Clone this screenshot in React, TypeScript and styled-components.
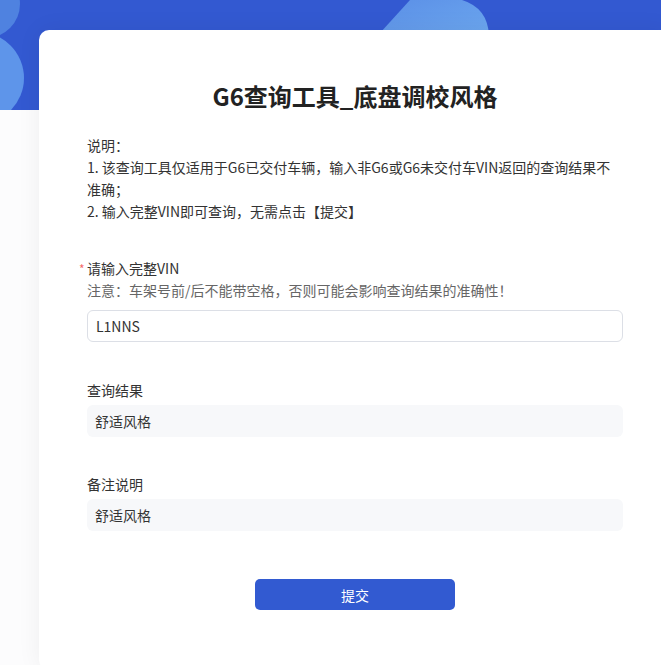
import React from "react";
import styled, { createGlobalStyle } from "styled-components";

const Global = createGlobalStyle`
  html, body { margin: 0; padding: 0; background: #fcfcfd; overflow: hidden; }
  body { font-family: "Noto Sans CJK SC", "Noto Sans", sans-serif; color: #333; }
  * { box-sizing: border-box; }
`;

const Page = styled.div`
  width: 661px;
  min-height: 665px;
  overflow: hidden;
`;

const Header = styled.div`
  position: relative;
  height: 110px;
  background: #3359d1;
  overflow: hidden;
`;

const Deco = styled.svg`
  position: absolute;
  left: 0;
  top: 0;
`;

const Card = styled.main`
  position: relative;
  margin: -80px 0 0 39px;
  width: 632px;
  min-height: 640px;
  background: #fff;
  border-radius: 10px;
  box-shadow: 0 0 24px rgba(0, 0, 0, 0.06);
  padding: 50px 48px 40px;
  display: flex;
  flex-direction: column;
`;

const Title = styled.h1`
  margin: 0;
  font-size: 24px;
  line-height: 32px;
  font-weight: 700;
  text-align: center;
  color: #222;
`;

const Notes = styled.div`
  margin-top: 22px;
  font-size: 14px;
  line-height: 22px;
  color: #333;
`;

const Field = styled.section<{ $gap: number }>`
  margin-top: ${(p) => p.$gap}px;
  display: flex;
  flex-direction: column;
`;

const Label = styled.label<{ $required?: boolean }>`
  position: relative;
  font-size: 14px;
  line-height: 22px;
  color: #333;
  &::before {
    content: ${(p) => (p.$required ? '"*"' : "none")};
    position: absolute;
    left: -8px;
    top: 1px;
    color: #f56c6c;
    font-size: 12px;
  }
`;

const Hint = styled.div`
  font-size: 14px;
  line-height: 22px;
  color: #666;
`;

const Input = styled.input`
  margin-top: 9px;
  height: 32px;
  width: 100%;
  border: 1px solid #dcdfe6;
  border-radius: 6px;
  padding: 0 8px;
  font-family: "Noto Sans CJK SC", "Noto Sans", sans-serif;
  font-size: 14px;
  color: #333;
  outline: none;
`;

const ReadBox = styled.div`
  margin-top: 4px;
  height: 32px;
  border-radius: 6px;
  background: #f7f8fa;
  padding: 0 8px;
  display: flex;
  align-items: center;
  font-size: 14px;
  color: #333;
`;

const Submit = styled.button`
  align-self: center;
  margin-top: 48px;
  width: 200px;
  height: 31px;
  border: none;
  border-radius: 5px;
  background: #325ad1;
  color: #fff;
  font-family: "Noto Sans CJK SC", "Noto Sans", sans-serif;
  font-size: 14px;
  cursor: pointer;
`;

export default function App() {
  return (
    <Page>
      <Global />
      <Header>
        <Deco width="661" height="110" viewBox="0 0 661 110">
          <defs>
            <linearGradient id="g1" x1="0" y1="0" x2="1" y2="1">
              <stop offset="0" stopColor="#5a8ee6" />
              <stop offset="1" stopColor="#6eaaf0" />
            </linearGradient>
          </defs>
          <circle cx="-14" cy="4" r="34" fill="#4f82e0" />
          <circle cx="-22" cy="78" r="46" fill="#5e95ea" />
          <path d="M370 44 L410 0 L462 0 Q488 8 489 36 L489 44 Z" fill="url(#g1)" />
        </Deco>
      </Header>
      <Card>
        <Title>G6查询工具_底盘调校风格</Title>
        <Notes>
          <div>说明：</div>
          <div>1. 该查询工具仅适用于G6已交付车辆，输入非G6或G6未交付车VIN返回的查询结果不准确；</div>
          <div>2. 输入完整VIN即可查询，无需点击【提交】</div>
        </Notes>
        <Field $gap={35}>
          <Label $required>请输入完整VIN</Label>
          <Hint>注意：车架号前/后不能带空格，否则可能会影响查询结果的准确性！</Hint>
          <Input defaultValue="L1NNS" />
        </Field>
        <Field $gap={37}>
          <Label>查询结果</Label>
          <ReadBox>舒适风格</ReadBox>
        </Field>
        <Field $gap={36}>
          <Label>备注说明</Label>
          <ReadBox>舒适风格</ReadBox>
        </Field>
        <Submit type="button">提交</Submit>
      </Card>
    </Page>
  );
}
